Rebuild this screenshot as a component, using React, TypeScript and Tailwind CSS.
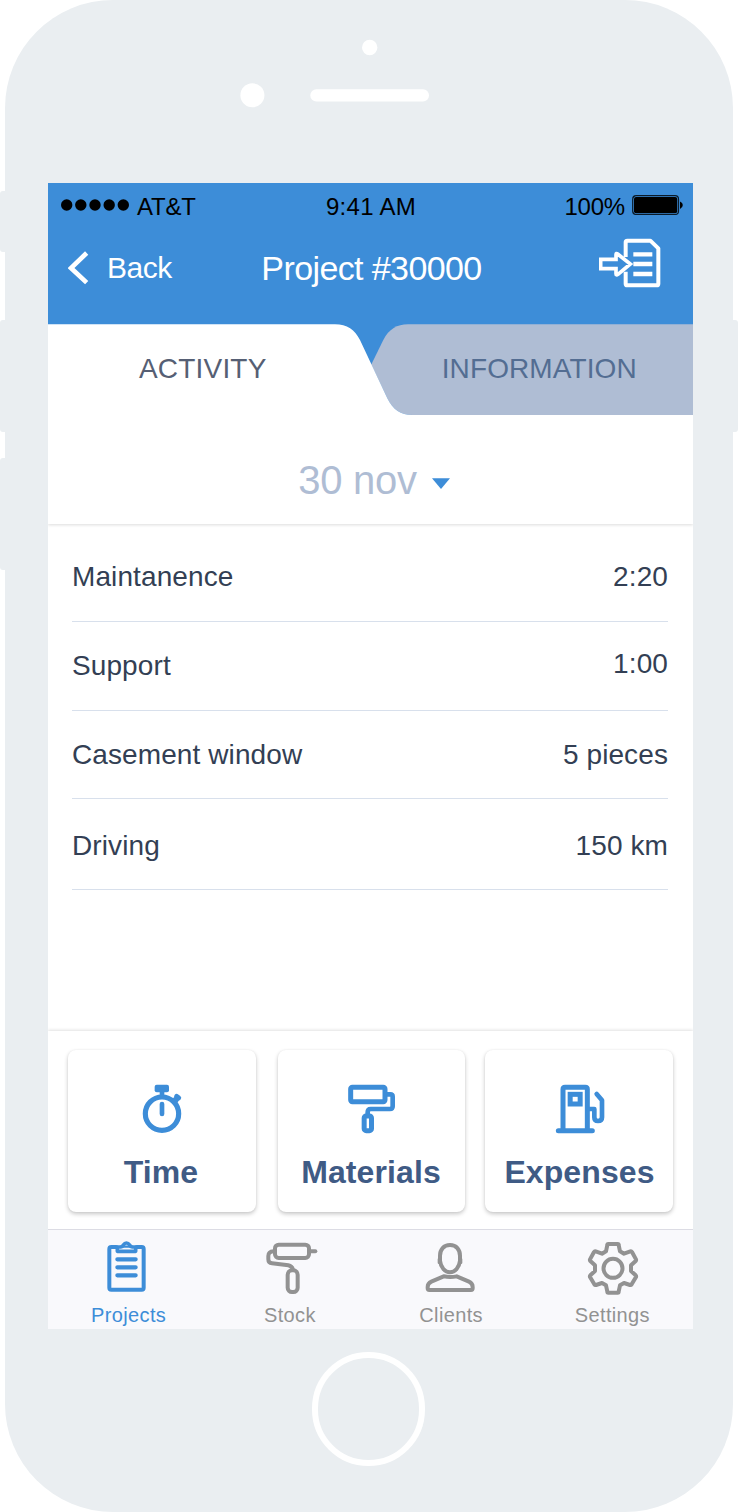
import type { ReactNode } from "react";

const entries = [
  { name: "Maintanence", value: "2:20", row: "h-[89px]", shift: "" },
  { name: "Support", value: "1:00", row: "h-[89px]", shift: "pb-[4px]" },
  { name: "Casement window", value: "5 pieces", row: "h-[88px]", shift: "" },
  { name: "Driving", value: "150 km", row: "h-[91px] pt-[3px]", shift: "" },
];

function TimeIcon() {
  return (
    <svg width="60" height="50" viewBox="216 177 180 150" fill="none" stroke="#3d8dd8" strokeLinecap="round">
      <circle cx="306" cy="266" r="50" strokeWidth="15.500" />
      <rect x="284" y="179" width="43" height="23" rx="6" fill="#3d8dd8" stroke="none" />
      <path d="M306 200V214" strokeWidth="14" strokeLinecap="butt" />
      <path d="M306 237V267" strokeWidth="14" />
      <path d="M338 236L350 221" strokeWidth="18" strokeLinecap="butt" />
      <path d="M350 214L356 219" strokeWidth="15" />
    </svg>
  );
}

function MaterialsIcon() {
  return (
    <svg width="60" height="50" viewBox="216 177 180 150" fill="none" stroke="#3d8dd8" strokeWidth="15" strokeLinejoin="round">
      <rect x="242" y="187" width="103" height="43" rx="5" />
      <path d="M350 208H361Q368 208 368 215V244Q368 252 360 252H302Q293 252 293 262V270" strokeWidth="14" />
      <rect x="282.500" y="273" width="22" height="44" rx="6" />
    </svg>
  );
}

function ExpensesIcon() {
  return (
    <svg width="60" height="50" viewBox="237 177 180 150" fill="none" stroke="#3d8dd8" strokeWidth="15" strokeLinecap="round" strokeLinejoin="round">
      <path d="M265 317H367" />
      <path d="M279 314V193Q279 187 285 187H346Q352 187 352 193V314" />
      <rect x="300.500" y="208" width="30" height="29" strokeLinejoin="miter" />
      <path d="M356 252H373V277Q373 288 384 288Q396 288 396 277V226L380 207" strokeWidth="14" />
    </svg>
  );
}

function ProjectsIcon() {
  return (
    <svg width="60" height="55" viewBox="154 60 180 165" fill="none" stroke="#3d8dd8" strokeWidth="12" strokeLinecap="round" strokeLinejoin="round">
      <path d="M206 81H191Q185 81 185 87V203Q185 209 191 209H282Q288 209 288 203V87Q288 81 282 81H267" />
      <path d="M209 81H219Q225 80 228 74Q231 69 236 69Q242 69 245 74Q248 80 254 81H264V94H209Z" strokeWidth="11" />
      <path d="M221 80H252" strokeWidth="7" />
      <path d="M209 118H264M209 142H264M209 166H264" strokeWidth="12.500" />
    </svg>
  );
}

function StockIcon() {
  return (
    <svg width="60" height="55" viewBox="636 60 180 165" fill="none" stroke="#929292" strokeWidth="12" strokeLinecap="round" strokeLinejoin="round">
      <rect x="681" y="74" width="102" height="40" rx="11" />
      <path d="M787 94H802" />
      <path d="M677 94Q661 95 661 108V118Q661 129 672 130L721 136Q732 138 735 149" />
      <rect x="719" y="151" width="30" height="65" rx="13" />
    </svg>
  );
}

function ClientsIcon() {
  return (
    <svg width="60" height="55" viewBox="129 60 180 165" fill="none" stroke="#929292" strokeWidth="12" strokeLinecap="round" strokeLinejoin="round">
      <path d="M216 75C197 75 186 89 186 107V122C188 142 201 157 216 157C231 157 244 142 246 122V107C246 89 235 75 216 75Z" />
      <path d="M183 118V128M249 118V128" strokeWidth="8" />
      <path d="M197 169L160 185Q149 190 149 201V205Q149 210 154 210H279Q284 210 284 205V201Q284 190 273 185L236 169Q217 173 197 169Z" />
    </svg>
  );
}

function SettingsIcon() {
  return (
    <svg width="60" height="55" viewBox="613 60 180 165" fill="none" stroke="#929292" strokeWidth="12" strokeLinejoin="round">
      <circle cx="706" cy="145" r="28.500" />
      <path d="M692 72H720Q723 72 723 75L727 94L739 101L758 94Q761 93 763 96L775 118Q776 121 774 123L760 136V153L774 166Q776 168 775 171L762 193Q760 196 757 195L739 189L727 196L723 215Q723 218 720 218H692Q689 218 689 215L685 196L673 189L655 195Q652 196 650 193L637 171Q636 168 638 166L652 153V136L638 123Q636 121 637 118L649 96Q651 93 654 94L673 101L685 94L689 75Q689 72 692 72Z" />
    </svg>
  );
}

function ActionCard({ icon, label, className, labelClass }: { icon: ReactNode; label: string; className: string; labelClass: string }) {
  return (
    <button
      className={`${className} flex h-[162px] flex-col items-center rounded-[8px] bg-white pt-[34px] shadow-[0_2px_4px_rgba(0,0,0,0.22),0_0_2px_rgba(0,0,0,0.06)]`}
    >
      {icon}
      <span className={`${labelClass} mt-[20px] whitespace-nowrap text-[32px] leading-[36px] font-bold tracking-[0.1px] text-[#3f5b85]`}>{label}</span>
    </button>
  );
}

function TabItem({ icon, label, active }: { icon: ReactNode; label: string; active?: boolean }) {
  return (
    <a className="flex flex-1 flex-col items-center pt-[10px]">
      {icon}
      <span className={`mt-[8px] text-[20px] leading-[24px] tracking-[0.35px] ${active ? "text-[#3d8dd8]" : "text-[#929292]"}`}>{label}</span>
    </a>
  );
}

export default function App() {
  return (
    <div className="relative h-[1512px] w-[738px] overflow-hidden bg-white px-[5px] font-['Liberation_Sans',Arial,sans-serif]">
      {/* Hardware buttons */}
      <div className="absolute top-[191px] left-0 h-[61px] w-[6px] rounded-l-[3px] bg-[#eaeef1]" />
      <div className="absolute top-[320px] left-0 h-[112px] w-[6px] rounded-l-[3px] bg-[#eaeef1]" />
      <div className="absolute top-[458px] left-0 h-[112px] w-[6px] rounded-l-[3px] bg-[#eaeef1]" />
      <div className="absolute top-[320px] right-0 h-[112px] w-[6px] rounded-r-[3px] bg-[#eaeef1]" />

      <div className="flex h-full w-full flex-col items-center rounded-[108px] bg-[#eaeef1]">
        <svg className="shrink-0" width="728" height="183" viewBox="5 0 728 183" fill="white">
          <circle cx="369.7" cy="47.5" r="7.7" />
          <circle cx="252.4" cy="95.3" r="12" />
          <rect x="310.3" y="89.2" width="118.7" height="12.2" rx="6" />
        </svg>

        <main className="ml-[3px] flex h-[1146px] w-[645px] shrink-0 flex-col overflow-hidden bg-white">
          <header className="bg-[#3d8dd8]">
            <div className="grid h-[48px] grid-cols-3 items-center pr-[10px] pl-[13px] text-[24px] leading-[24px] text-black">
              <div className="flex items-center">
                <svg className="-mt-[5px]" width="69" height="12" viewBox="0 0 69 12">
                  <circle cx="5.7" cy="6" r="5.7" />
                  <circle cx="19.8" cy="6" r="5.7" />
                  <circle cx="34" cy="6" r="5.7" />
                  <circle cx="48.2" cy="6" r="5.7" />
                  <circle cx="62.3" cy="6" r="5.7" />
                </svg>
                <span className="ml-[7px] tracking-[-0.2px]">AT&amp;T</span>
              </div>
              <span className="pr-[2px] text-center tracking-[0.3px]">9:41 AM</span>
              <div className="flex items-center justify-end">
                <span className="tracking-[-0.2px]">100%</span>
                <svg className="-mt-[4px] ml-[7px]" width="51" height="20" viewBox="0 0 51 20">
                  <rect x="0.7" y="0.7" width="45.8" height="18.8" rx="3.5" fill="none" stroke="#0a1a28" strokeWidth="1.2" />
                  <rect x="2" y="2" width="43.2" height="16.2" rx="2" />
                  <path d="M48 6.500Q50.800 7.500 50.800 10T48 14Z" />
                </svg>
              </div>
            </div>
            <nav className="grid h-[93px] grid-cols-[184px_1fr_170px] items-center pr-[32px] pb-[19px] pl-[20px] text-white">
              <a className="flex items-center text-[30px] leading-[36px] tracking-[-0.5px]">
                <svg width="22" height="34" viewBox="60 213 66 102" fill="none" stroke="white" strokeWidth="14">
                  <path d="M116 219L69 264L116 308" />
                </svg>
                <span className="ml-[17px]">Back</span>
              </a>
              <h1 className="text-center whitespace-nowrap text-[34px] leading-[40px] tracking-[-0.6px]">Project #30000</h1>
              <svg className="-mt-[11px] justify-self-end" width="62" height="50" viewBox="663 173 186 150" fill="none" stroke="white" strokeWidth="12" strokeLinejoin="round">
                <path d="M743 230V186Q743 181 748 181H817L841 204V310Q841 315 836 315H748Q743 315 743 310V274" />
                <path d="M766 222H823M766 251H823M766 281H823" strokeWidth="13" />
                <path d="M668 237H714V223Q714 217 719 221L757 251L720 282Q714 286 714 280V265H668Z" strokeWidth="11" strokeLinejoin="miter" />
              </svg>
            </nav>
            <div className="relative grid h-[91px] grid-cols-2 items-center text-[28px] leading-[32px]">
              <svg className="absolute inset-0" width="645" height="91" viewBox="0 0 645 91">
                <path d="M323.300 40.500L335.300 16C341 5 349 0.300 360 0.300H645V91H364C353 91 345 86 339.300 74.300Z" fill="#afbdd4" />
                <path d="M0 91V0.300H287C299 0.300 307 6 312 16L339.300 74.300C345 86 353 91 364 91Z" fill="white" />
              </svg>
              <span className="relative pr-[13px] pb-px text-center tracking-[0.2px] text-[#565f74]">ACTIVITY</span>
              <span className="relative pb-px pl-[15px] text-center tracking-[0.1px] text-[#536d92]">INFORMATION</span>
            </div>
          </header>

          <section className="flex h-[109px] shrink-0 items-center justify-center pt-[21px] pl-[7px] shadow-[0_1px_3px_rgba(0,0,0,0.14)]">
            <span className="text-[40px] leading-[44px] tracking-[-0.3px] text-[#afbdd4]">30 nov</span>
            <svg className="mt-[7px] ml-[15px]" width="18" height="11" viewBox="0 0 18 11" fill="#3d8dd8">
              <path d="M0 0.300H18L9 11Z" />
            </svg>
          </section>

          <ul className="mr-[25px] ml-[24px] flex h-[507px] flex-col pt-[9px] text-[28px] leading-[32px] tracking-[0.1px] text-[#333f54]">
            {entries.map((entry) => (
              <li key={entry.name} className={`${entry.row} flex shrink-0 items-center justify-between border-b border-[#d8e0ec]`}>
                <span>{entry.name}</span>
                <span className={entry.shift}>{entry.value}</span>
              </li>
            ))}
          </ul>

          <section className="flex h-[198px] shrink-0 items-start pt-[19px] pl-[20px] shadow-[0_-1px_3px_rgba(0,0,0,0.12)]">
            <ActionCard icon={<TimeIcon />} label="Time" className="w-[188px]" labelClass="pr-[2px]" />
            <ActionCard icon={<MaterialsIcon />} label="Materials" className="ml-[22px] w-[187px]" labelClass="pr-[1px]" />
            <ActionCard icon={<ExpensesIcon />} label="Expenses" className="ml-[20px] w-[188px]" labelClass="pl-[1px]" />
          </section>

          <footer className="flex h-[100px] shrink-0 border-t border-[#dcdce4] bg-[#f9f9fc]">
            <TabItem icon={<ProjectsIcon />} label="Projects" active />
            <TabItem icon={<StockIcon />} label="Stock" />
            <TabItem icon={<ClientsIcon />} label="Clients" />
            <TabItem icon={<SettingsIcon />} label="Settings" />
          </footer>
        </main>

        <div className="mt-[23px] mr-[1px] h-[114px] w-[113px] shrink-0 rounded-full border-[6px] border-white" />
      </div>
    </div>
  );
}
